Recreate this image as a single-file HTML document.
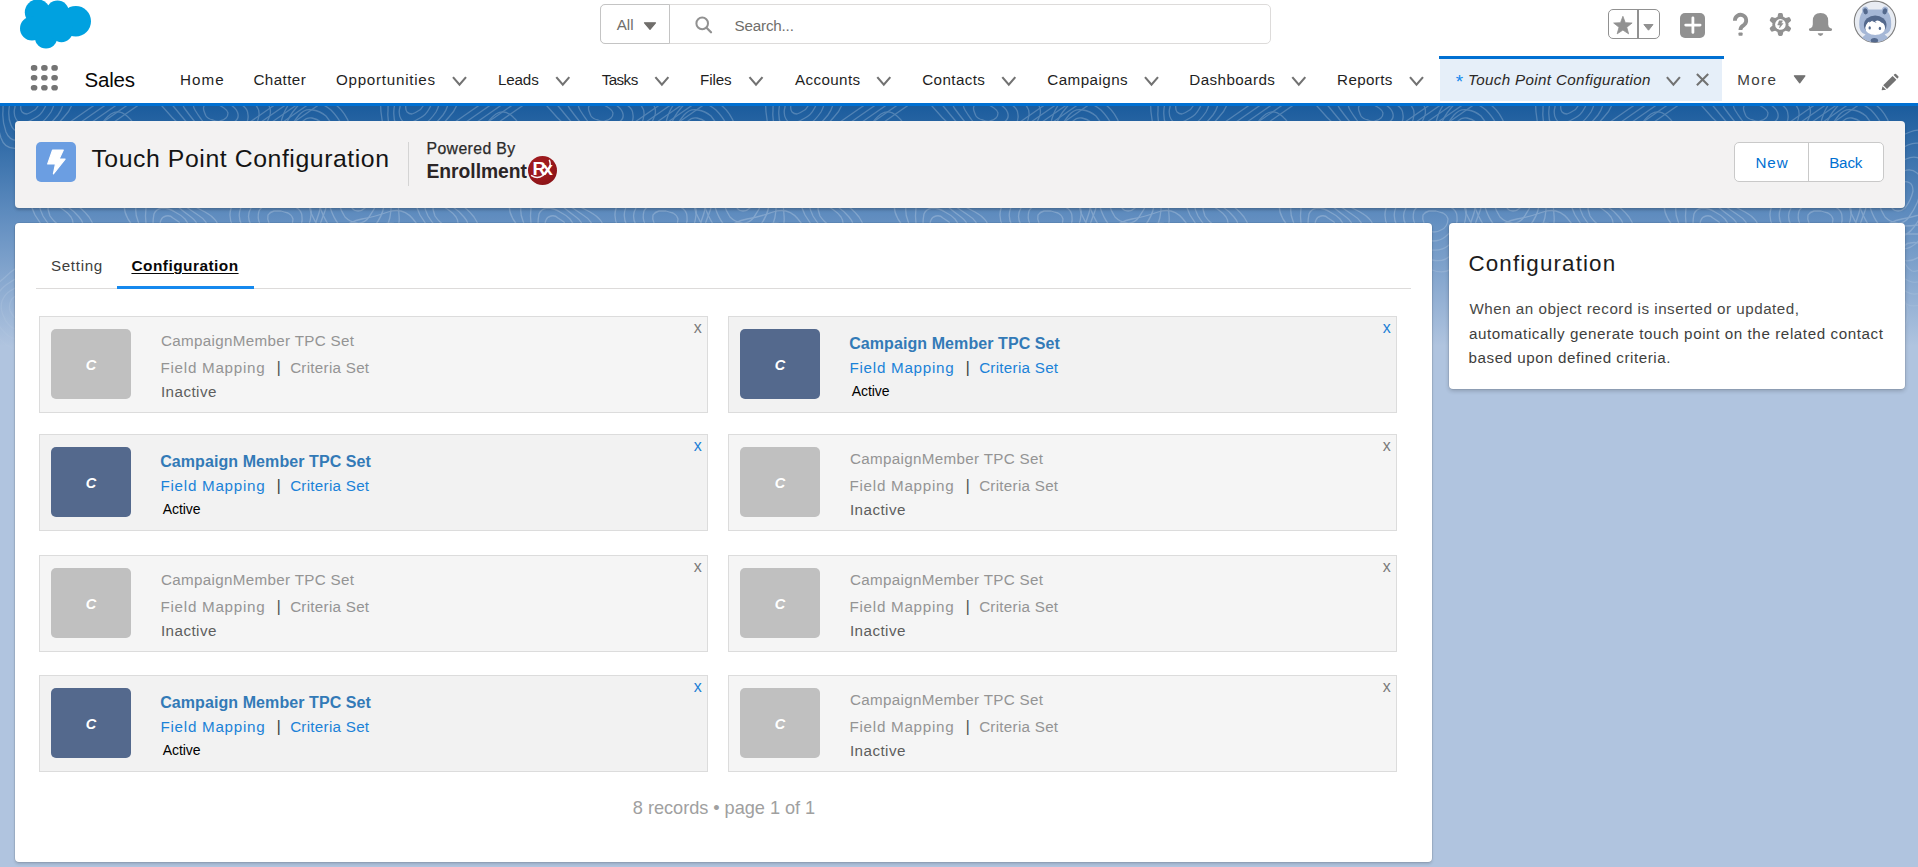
<!DOCTYPE html>
<html lang="en">
<head>
<meta charset="utf-8">
<title>Touch Point Configuration | Salesforce</title>
<style>
html,body{margin:0;padding:0}
body{width:1918px;height:867px;overflow:hidden;position:relative;background:#b0c4df;font-family:"Liberation Sans",sans-serif}
.abs,.t,.card,.av,svg{position:absolute}
.t{white-space:pre;display:block}
#band{left:0;top:106px;width:1918px;height:240px;background:linear-gradient(to bottom,#1b5c9d 0%,#6691c2 50%,#b0c4df 100%)}
#hdr{left:0;top:0;width:1918px;height:103px;background:#fff}
#bar{left:0;top:103px;width:1918px;height:3.4px;background:#0070d2}
#search{left:600px;top:4px;width:669px;height:38px;border:1px solid #dddbda;border-radius:5px;background:#fff}
#all{left:600px;top:4px;width:67.5px;height:38px;border:1px solid #c4c4c4;border-radius:5px 0 0 5px;background:#fff}
#fav{left:1608px;top:9px;width:50px;height:28px;border:1px solid #919191;border-radius:5px;background:#fff}
#favd{left:1636.8px;top:9px;width:2px;height:30px;background:#919191}
#plus{left:1680px;top:13px;width:25px;height:25px;border-radius:5px;background:#919191}
#tabtop{left:1438.8px;top:55.8px;width:285.2px;height:3.4px;background:#0070d2}
#tabbg{left:1439.8px;top:59.2px;width:282.2px;height:42.2px;background:#e6eff9}
#phead{left:15px;top:121px;width:1890px;height:86.6px;background:#f3f2f2;border-radius:4px;box-shadow:0 2px 3px rgba(0,0,0,.22)}
#picon{left:36px;top:142px;width:40px;height:40px;border-radius:5px;background:#6b9ee2}
#pdiv{left:408px;top:142px;width:1px;height:44px;background:#d4d4d4}
#btns{left:1734px;top:142px;width:148px;height:38px;border:1px solid #c9c9c9;border-radius:5px;background:#fff}
#btnd{left:1808px;top:142px;width:1px;height:40px;background:#c9c9c9}
#main{left:15.2px;top:223px;width:1417.3px;height:639.3px;background:#fff;border-radius:4px;box-shadow:0 0 0 .6px rgba(0,0,0,.13),0 2px 3px rgba(0,0,0,.15)}
#side{left:1448.5px;top:223.4px;width:456px;height:165.8px;background:#fff;border-radius:4px;box-shadow:0 0 0 .6px rgba(0,0,0,.1),0 2px 4px rgba(0,0,0,.2)}
#tabline{left:36px;top:287.6px;width:1375px;height:1.1px;background:#dddbda}
#tabact{left:117px;top:285.8px;width:136.7px;height:3px;background:#1589ee}
.card{width:667.3px;height:94.8px;border:1px solid #dcdcdc;box-sizing:content-box}
.av{left:11.2px;top:11.9px;width:80px;height:70px;border-radius:5px}
#rx{left:527.6px;top:155.6px;width:29.6px;height:29.6px;border-radius:50%;background:radial-gradient(circle at 40% 35%,#a81e22 0%,#96171b 55%,#7d0f13 100%)}
</style>
</head>
<body>
<div class="abs" id="band"></div>
<svg class="abs" id="tex" style="left:0;top:106px;opacity:.22;-webkit-mask-image:linear-gradient(to bottom,#000 0%,#000 45%,transparent 100%);mask-image:linear-gradient(to bottom,#000 0%,#000 45%,transparent 100%)" width="1918" height="250" viewBox="0 0 1918 250"><g id="tx" fill="none" stroke="#fff" stroke-width="1.3"><path d="M27 8Q24 8 22 6Q20 3 21 -1Q22 -4 23 -8Q24 -11 27 -14Q30 -17 33 -16Q36 -15 37 -13Q39 -10 39 -7Q40 -3 38 0Q36 4 33 5Q30 7 27 8Z"/><path d="M25 17Q19 18 16 13Q13 8 15 1Q16 -5 18 -11Q19 -18 24 -23Q30 -28 35 -25Q39 -22 42 -18Q45 -14 46 -9Q48 -3 44 3Q41 9 35 12Q30 15 25 17Z"/><path d="M22 25Q14 27 11 19Q8 12 9 3Q10 -5 12 -15Q13 -25 21 -31Q29 -38 36 -33Q42 -28 47 -23Q51 -19 54 -11Q56 -3 51 6Q45 15 38 19Q30 24 22 25Z"/><path d="M20 34Q10 36 6 26Q2 15 3 5Q3 -5 5 -19Q7 -33 18 -40Q29 -46 37 -39Q45 -32 52 -28Q59 -24 62 -13Q66 -2 58 9Q49 20 40 26Q31 32 20 34Z"/><path d="M18 42Q5 44 1 32Q-3 19 -4 6Q-5 -6 -3 -24Q-0 -41 14 -47Q29 -52 38 -44Q46 -36 57 -33Q68 -31 72 -16Q76 -1 64 11Q53 24 42 32Q31 40 18 42Z"/><path d="M111 46Q109 43 110 39Q110 36 112 33Q114 30 117 28Q120 26 123 28Q127 30 128 34Q129 37 129 41Q130 44 129 48Q127 52 124 52Q120 52 117 51Q114 49 111 46Z"/><path d="M105 51Q101 46 102 39Q103 33 106 27Q109 22 114 18Q120 14 125 19Q131 23 133 29Q135 36 136 42Q138 48 136 55Q133 61 127 61Q120 61 115 59Q109 56 105 51Z"/><path d="M99 56Q93 48 95 39Q97 29 100 21Q104 13 111 8Q119 3 127 10Q135 17 138 26Q140 34 144 43Q148 53 144 62Q139 71 130 70Q120 69 113 66Q105 63 99 56Z"/><path d="M228 7Q228 10 226 12Q224 14 220 15Q217 16 213 14Q208 13 206 10Q205 8 204 5Q203 2 204 -0Q205 -3 209 -3Q213 -3 217 -2Q221 0 224 2Q227 4 228 7Z"/><path d="M238 8Q239 13 234 16Q230 19 224 21Q218 23 211 20Q204 18 201 13Q198 9 195 4Q192 -1 194 -6Q196 -10 204 -10Q212 -9 218 -7Q224 -4 231 -1Q237 3 238 8Z"/><path d="M248 9Q249 16 243 20Q236 25 228 27Q220 30 210 26Q200 22 195 16Q190 10 185 3Q180 -4 184 -11Q188 -18 200 -16Q211 -14 220 -11Q228 -8 238 -3Q248 1 248 9Z"/><path d="M259 9Q258 19 250 24Q242 30 232 34Q221 37 208 32Q196 26 189 19Q182 11 174 1Q166 -8 173 -16Q181 -24 196 -21Q211 -17 222 -15Q233 -13 247 -7Q260 -1 259 9Z"/><path d="M270 9Q266 21 257 28Q248 35 235 40Q222 45 207 37Q192 30 182 21Q172 12 162 -0Q152 -13 164 -21Q175 -29 193 -24Q210 -20 224 -20Q239 -19 256 -11Q273 -3 270 9Z"/><path d="M309 39Q306 39 303 38Q300 37 300 33Q300 29 302 27Q303 24 306 21Q308 19 311 20Q314 20 316 22Q318 25 319 28Q321 31 319 34Q318 37 315 38Q312 39 309 39Z"/><path d="M308 46Q303 47 297 45Q292 42 292 36Q293 29 296 24Q298 19 303 15Q307 11 312 12Q317 13 321 16Q324 20 327 26Q330 31 326 37Q323 42 318 44Q313 45 308 46Z"/><path d="M306 54Q299 57 291 52Q284 48 285 38Q287 29 290 22Q294 15 299 9Q305 2 313 4Q320 5 326 10Q331 16 335 24Q338 31 333 39Q328 47 321 49Q314 50 306 54Z"/><path d="M304 62Q294 68 285 60Q276 53 279 41Q283 29 286 19Q289 10 296 2Q303 -7 313 -5Q324 -2 331 4Q338 11 343 21Q347 32 339 41Q332 50 323 53Q315 57 304 62Z"/><path d="M303 72Q289 80 279 69Q270 57 275 43Q280 29 281 17Q283 5 292 -6Q302 -18 314 -13Q326 -9 336 -1Q345 6 350 19Q355 32 345 43Q335 53 325 59Q316 65 303 72Z"/><path d="M73 117Q72 120 69 120Q66 121 62 120Q58 119 55 116Q52 113 50 110Q49 107 48 103Q48 100 51 99Q53 97 57 100Q61 102 65 105Q68 107 71 111Q73 114 73 117Z"/><path d="M82 122Q80 126 75 128Q70 129 63 128Q57 127 51 121Q46 115 43 110Q40 104 39 98Q37 91 43 90Q49 88 56 93Q62 97 68 101Q74 105 79 111Q85 118 82 122Z"/><path d="M92 127Q87 132 80 134Q74 136 65 135Q56 134 48 126Q40 118 35 109Q31 101 29 92Q27 82 36 82Q45 81 54 87Q63 92 73 97Q82 102 89 111Q96 121 92 127Z"/><path d="M181 122Q182 125 179 126Q177 128 174 129Q170 129 166 129Q162 128 161 125Q159 121 160 119Q160 116 161 114Q162 111 166 110Q170 109 173 112Q176 114 179 116Q181 119 181 122Z"/><path d="M190 123Q191 128 186 131Q182 134 176 136Q171 137 164 135Q157 133 154 128Q152 122 153 118Q153 113 154 108Q156 103 162 102Q169 102 175 106Q181 109 185 113Q189 118 190 123Z"/><path d="M199 124Q200 132 194 136Q187 140 179 143Q171 146 161 142Q151 139 149 131Q147 123 146 117Q145 110 146 102Q148 94 158 94Q169 95 177 100Q184 106 191 111Q198 116 199 124Z"/><path d="M209 125Q210 135 201 141Q192 146 182 150Q171 154 159 149Q147 143 144 133Q141 124 138 115Q134 106 137 95Q140 85 154 87Q169 89 178 96Q188 102 198 109Q208 115 209 125Z"/><path d="M219 126Q219 139 208 146Q197 152 185 157Q172 162 157 155Q143 147 139 136Q136 124 128 113Q121 101 127 89Q133 76 151 81Q169 86 180 92Q191 99 205 106Q220 114 219 126Z"/><path d="M279 126Q275 126 272 123Q270 120 269 117Q267 113 268 109Q270 106 274 105Q277 105 281 105Q284 106 288 107Q292 109 293 113Q293 117 291 120Q289 123 286 124Q283 126 279 126Z"/><path d="M278 135Q271 134 267 129Q262 124 260 118Q257 112 259 105Q262 99 269 99Q276 98 282 98Q288 98 295 101Q302 104 302 111Q303 118 298 123Q294 128 290 131Q285 135 278 135Z"/><path d="M277 144Q267 142 261 135Q255 127 251 119Q246 110 251 102Q256 94 265 93Q274 92 283 90Q292 89 302 94Q313 99 311 109Q310 120 305 126Q300 132 294 139Q287 145 277 144Z"/><path d="M277 154Q263 151 255 141Q248 131 242 120Q236 108 243 98Q250 88 261 87Q273 85 285 82Q297 78 310 86Q323 94 319 107Q315 120 310 129Q305 137 298 147Q290 157 277 154Z"/><path d="M277 164Q260 158 250 146Q241 134 233 121Q226 107 235 95Q245 84 258 80Q271 77 287 72Q303 66 317 78Q331 90 325 105Q319 121 315 132Q312 143 303 157Q293 170 277 164Z"/><path d="M358 105Q354 105 352 102Q349 99 348 94Q346 90 349 86Q351 81 354 79Q358 77 362 76Q366 75 370 77Q373 79 373 85Q372 90 370 94Q368 98 365 102Q362 105 358 105Z"/><path d="M357 117Q350 116 345 111Q341 105 339 98Q336 90 340 83Q344 75 350 71Q357 68 364 65Q371 62 377 67Q383 72 381 81Q380 90 377 97Q374 104 369 111Q364 118 357 117Z"/><path d="M356 130Q346 127 339 119Q333 111 330 101Q326 90 332 80Q338 69 347 63Q355 58 366 53Q377 48 384 56Q392 65 389 77Q386 90 384 100Q382 111 374 121Q366 132 356 130Z"/><path d="M355 141Q342 136 334 126Q326 117 321 104Q316 91 324 77Q332 63 343 55Q353 46 368 39Q382 33 391 46Q399 59 395 74Q391 90 391 104Q390 119 380 133Q369 147 355 141Z"/><path d="M355 151Q340 142 329 133Q318 123 311 107Q305 91 315 74Q326 57 338 45Q351 33 370 26Q388 19 396 37Q403 56 400 73Q397 89 399 109Q401 129 386 145Q371 161 355 151Z"/><path d="M20 213Q16 213 14 211Q12 208 10 205Q9 201 10 197Q11 193 14 191Q17 190 20 188Q23 187 27 189Q30 190 30 194Q31 199 29 202Q28 206 25 209Q23 212 20 213Z"/><path d="M20 223Q14 224 9 219Q5 215 3 209Q-0 203 2 195Q5 188 10 185Q15 182 21 179Q26 176 32 179Q38 182 38 190Q37 198 35 204Q33 210 29 216Q26 223 20 223Z"/><path d="M20 234Q11 233 5 227Q-1 221 -5 212Q-9 204 -5 194Q-1 184 6 179Q13 174 22 169Q30 164 38 169Q46 174 44 186Q43 197 41 206Q39 215 34 224Q29 234 20 234Z"/><path d="M20 245Q8 242 1 234Q-7 227 -12 216Q-17 205 -12 192Q-6 180 3 173Q11 165 22 158Q34 150 43 159Q52 168 49 182Q47 197 46 208Q46 220 39 233Q32 247 20 245Z"/><path d="M113 219Q110 218 109 215Q109 212 111 209Q113 206 115 204Q117 201 121 199Q125 198 127 200Q129 202 130 205Q130 208 129 211Q129 215 126 217Q123 219 120 220Q116 220 113 219Z"/><path d="M108 226Q102 225 102 219Q101 213 104 208Q108 203 111 198Q115 193 121 191Q128 188 132 193Q135 198 136 202Q137 207 137 213Q136 218 131 222Q125 226 119 227Q113 228 108 226Z"/><path d="M103 233Q95 231 94 223Q94 215 98 208Q102 201 107 192Q112 184 122 182Q131 180 135 187Q140 194 142 200Q145 206 144 214Q144 223 136 228Q127 233 119 234Q110 235 103 233Z"/><path d="M98 240Q87 237 88 226Q88 216 92 206Q96 197 102 185Q109 174 121 173Q134 172 139 181Q143 191 148 197Q154 204 153 216Q152 227 141 233Q129 240 118 241Q108 243 98 240Z"/><path d="M225 228Q220 226 219 222Q217 218 217 213Q217 209 219 205Q221 200 226 201Q231 201 234 203Q238 206 241 209Q245 212 245 217Q245 222 241 224Q238 227 233 228Q229 229 225 228Z"/><path d="M221 237Q213 234 210 227Q207 220 206 212Q206 204 210 197Q214 189 223 190Q232 192 238 196Q244 199 250 205Q257 210 257 218Q257 227 250 231Q243 235 235 238Q228 240 221 237Z"/><path d="M217 247Q206 243 201 232Q197 222 195 210Q194 199 201 189Q208 179 220 182Q232 184 241 188Q250 192 261 199Q272 207 270 219Q267 232 257 237Q247 242 237 247Q228 251 217 247Z"/><path d="M325 209Q321 208 320 205Q319 201 320 198Q321 195 323 192Q325 189 328 188Q332 188 335 190Q337 193 339 196Q340 199 340 202Q341 206 338 208Q335 210 332 210Q328 211 325 209Z"/><path d="M321 216Q315 214 314 208Q312 202 313 197Q315 192 317 186Q320 180 327 179Q333 179 338 184Q342 189 345 193Q348 198 349 204Q349 211 344 214Q339 218 333 218Q327 219 321 216Z"/><path d="M317 223Q309 220 307 212Q305 203 306 195Q307 187 311 179Q315 170 325 170Q335 171 340 178Q346 185 351 191Q357 197 358 206Q358 216 350 220Q342 225 334 226Q326 227 317 223Z"/><path d="M314 230Q303 226 301 215Q298 204 298 193Q298 183 304 171Q310 160 323 162Q336 165 342 173Q349 182 359 189Q368 195 368 208Q368 221 357 226Q345 231 335 232Q324 234 314 230Z"/><path d="M389 148Q388 153 386 157Q383 161 379 164Q375 166 372 165Q368 163 366 159Q364 156 362 151Q361 146 363 142Q366 137 370 137Q375 136 378 137Q382 138 385 140Q389 143 389 148Z"/><path d="M399 146Q398 156 393 162Q389 169 382 174Q376 178 369 175Q362 172 358 166Q354 160 352 152Q349 144 354 136Q359 128 367 128Q374 128 381 128Q388 127 394 132Q401 137 399 146Z"/><path d="M409 144Q406 158 400 167Q394 177 385 184Q376 191 367 186Q357 181 351 173Q344 165 341 153Q337 140 345 131Q354 121 364 120Q374 120 384 118Q395 115 404 123Q413 131 409 144Z"/><path d="M418 142Q412 159 406 172Q400 185 388 194Q376 204 364 197Q352 191 343 181Q334 171 329 154Q325 138 338 126Q350 115 362 113Q374 111 388 106Q403 101 413 113Q424 125 418 142Z"/><path d="M70 16L96 -2"/><path d="M81 16L107 -2"/><path d="M92 16L118 -2"/><path d="M103 16L129 -2"/><path d="M114 16L140 -2"/><path d="M250 16L276 -2"/><path d="M261 16L287 -2"/><path d="M272 16L298 -2"/><path d="M283 16L309 -2"/><path d="M294 16L320 -2"/></g><use href="#tx" x="385"/><use href="#tx" x="770"/><use href="#tx" x="1155"/><use href="#tx" x="1540"/></svg>
<div class="abs" id="hdr"></div>
<div class="abs" id="bar"></div>
<div class="abs" id="search"></div>
<div class="abs" id="all"></div>
<div class="abs" id="fav"></div>
<div class="abs" id="favd"></div>
<div class="abs" id="plus"></div>
<div class="abs" id="tabtop"></div>
<div class="abs" id="tabbg"></div>
<div class="abs" id="phead"></div>
<div class="abs" id="picon"></div>
<div class="abs" id="pdiv"></div>
<div class="abs" id="btns"></div>
<div class="abs" id="btnd"></div>
<div class="abs" id="main"></div>
<div class="abs" id="side"></div>
<div class="abs" id="tabline"></div>
<div class="abs" id="tabact"></div>
<div class="abs" id="rx"></div>
<svg class="abs" style="left:0;top:0" width="1918" height="867" viewBox="0 0 1918 867">
<g fill="#00a1e0"><circle cx="37.6" cy="12.2" r="12.8"/><circle cx="57.5" cy="11.6" r="11.2"/><circle cx="75.8" cy="21.3" r="15.2"/><circle cx="32" cy="28.6" r="12"/><circle cx="46" cy="37.3" r="11.2"/><circle cx="61.5" cy="30.8" r="11.4"/><rect x="34" y="12" width="38" height="24"/></g>
<rect x="30.8" y="65.1" width="6.6" height="5.6" rx="2.8" fill="#747474"/>
<rect x="41.1" y="65.1" width="6.6" height="5.6" rx="2.8" fill="#747474"/>
<rect x="51.3" y="65.1" width="6.6" height="5.6" rx="2.8" fill="#747474"/>
<rect x="30.8" y="75.0" width="6.6" height="5.6" rx="2.8" fill="#747474"/>
<rect x="41.1" y="75.0" width="6.6" height="5.6" rx="2.8" fill="#747474"/>
<rect x="51.3" y="75.0" width="6.6" height="5.6" rx="2.8" fill="#747474"/>
<rect x="30.8" y="85.0" width="6.6" height="5.6" rx="2.8" fill="#747474"/>
<rect x="41.1" y="85.0" width="6.6" height="5.6" rx="2.8" fill="#747474"/>
<rect x="51.3" y="85.0" width="6.6" height="5.6" rx="2.8" fill="#747474"/>
<path d="M453.0 77.1L459.5 84.7L466.0 77.1" fill="none" stroke="#727272" stroke-width="2.1" stroke-linejoin="miter"/>
<path d="M556.3 77.1L562.8 84.7L569.3 77.1" fill="none" stroke="#727272" stroke-width="2.1" stroke-linejoin="miter"/>
<path d="M655.4 77.1L661.9 84.7L668.4 77.1" fill="none" stroke="#727272" stroke-width="2.1" stroke-linejoin="miter"/>
<path d="M749.5 77.1L756.0 84.7L762.5 77.1" fill="none" stroke="#727272" stroke-width="2.1" stroke-linejoin="miter"/>
<path d="M877.3 77.1L883.8 84.7L890.3 77.1" fill="none" stroke="#727272" stroke-width="2.1" stroke-linejoin="miter"/>
<path d="M1002.3 77.1L1008.8 84.7L1015.3 77.1" fill="none" stroke="#727272" stroke-width="2.1" stroke-linejoin="miter"/>
<path d="M1145.0 77.1L1151.5 84.7L1158.0 77.1" fill="none" stroke="#727272" stroke-width="2.1" stroke-linejoin="miter"/>
<path d="M1292.3 77.1L1298.8 84.7L1305.3 77.1" fill="none" stroke="#727272" stroke-width="2.1" stroke-linejoin="miter"/>
<path d="M1410.0 77.1L1416.5 84.7L1423.0 77.1" fill="none" stroke="#727272" stroke-width="2.1" stroke-linejoin="miter"/>
<path d="M1666.9 77.1L1673.4 84.7L1679.9 77.1" fill="none" stroke="#727272" stroke-width="2.1" stroke-linejoin="miter"/>
<path d="M1696.9 74L1708.2 85.2M1708.2 74L1696.9 85.2" stroke="#727272" stroke-width="2.1" fill="none"/>
<path d="M1794.4 75.8L1804.9 75.8L1799.7 82.8Z" fill="#727272" stroke="#727272" stroke-width="1.2" stroke-linejoin="round"/>
<g fill="#727272"><path d="M1892.6 75.9L1896.4 79.7L1887.0 89.0L1883.2 85.3Z"/><path d="M1893.6 74.9L1894.6 73.9Q1895.3 73.4 1896 73.9L1898.3 76.2Q1898.8 76.9 1898.3 77.6L1897.3 78.7Z"/><path d="M1882.5 86.2L1886.1 89.8L1881.9 90.2Q1881.6 90.1 1881.7 89.8Z"/></g>
<path d="M644.5 22.8L655.5 22.8L650.0 29.4Z" fill="#706e6b" stroke="#706e6b" stroke-width="1.2" stroke-linejoin="round"/>
<circle cx="702.2" cy="23.4" r="5.8" fill="none" stroke="#919191" stroke-width="2"/><path d="M706.5 27.8L711 32.2" stroke="#919191" stroke-width="2.3" stroke-linecap="round"/>
<path d="M1622.90 16.30L1625.29 22.70L1632.13 23.00L1626.77 27.26L1628.60 33.85L1622.90 30.07L1617.20 33.85L1619.03 27.26L1613.67 23.00L1620.51 22.70Z" fill="#919191" stroke="#919191" stroke-width="0.8" stroke-linejoin="round"/>
<path d="M1643.9 24.5L1653.0 24.5L1648.5 30.2Z" fill="#919191" stroke="#919191" stroke-width="1.0" stroke-linejoin="round"/>
<path d="M1685.7 25.1H1700.1M1692.9 17.8V32.4" stroke="#fff" stroke-width="2.8" stroke-linecap="round"/>
<path d="M1734.9 20.7A5.65 5.65 0 1 1 1744.3 24.7Q1740.4 26.7 1740.4 30" fill="none" stroke="#919191" stroke-width="3.8"/><rect x="1738.5" y="32.4" width="4.1" height="3.4" rx=".8" fill="#919191"/>
<path d="M1778.76 17.70L1779.49 14.34L1781.31 14.34L1782.04 17.70L1785.38 19.63L1788.66 18.58L1789.57 20.16L1787.02 22.47L1787.02 26.33L1789.57 28.64L1788.66 30.22L1785.38 29.17L1782.04 31.10L1781.31 34.46L1779.49 34.46L1778.76 31.10L1775.42 29.17L1772.14 30.22L1771.23 28.64L1773.78 26.33L1773.78 22.47L1771.23 20.16L1772.14 18.58L1775.42 19.63Z" fill="#919191" stroke="#919191" stroke-width="2.9" stroke-linejoin="round"/><circle cx="1780.4" cy="24.4" r="5.3" fill="#fff"/><path d="M1779.20 20.80L1782.50 20.80L1781.25 23.50L1783.10 23.50L1779.45 28.00L1780.10 25.00L1777.70 25.00Z" fill="#919191" stroke="#919191" stroke-width="0.5" stroke-linejoin="round"/>
<path d="M1810.2 30.9Q1808.9 30.9 1808.9 29.6Q1808.9 28.2 1810.4 28.2Q1812.8 27.6 1812.8 24.6V21Q1812.8 12.9 1820.5 12.9Q1828.2 12.9 1828.2 21V24.6Q1828.2 27.6 1830.6 28.2Q1832.1 28.2 1832.1 29.6Q1832.1 30.9 1830.8 30.9Z" fill="#919191"/><path d="M1817.7 33.3H1823.3Q1822.8 36 1820.5 36Q1818.2 36 1817.7 33.3Z" fill="#919191"/>
<defs><clipPath id="avc"><circle cx="1875" cy="21.8" r="20.4"/></clipPath></defs>
<circle cx="1875" cy="21.8" r="20.7" fill="#e8ecf3" stroke="#808080" stroke-width="1.1"/>
<g clip-path="url(#avc)"><ellipse cx="1865.4" cy="10.9" rx="3.2" ry="4.3" fill="#a5b7d6" transform="rotate(-12 1865.4 10.9)"/><ellipse cx="1884.9" cy="10.9" rx="3.2" ry="4.3" fill="#a5b7d6" transform="rotate(12 1884.9 10.9)"/><path d="M1859.2 24.6Q1859.2 9.4 1868.6 9.6H1881.6Q1891.2 9.4 1891.2 24.6Q1891.2 33.4 1884.6 34.6L1891.6 40.4V46H1858.6V40.4L1865.6 34.6Q1859.2 33.4 1859.2 24.6Z" fill="#a5b7d6"/><ellipse cx="1865.5" cy="11.3" rx="2.2" ry="3.1" fill="#54698d" transform="rotate(-12 1865.5 11.3)"/><ellipse cx="1884.8" cy="11.3" rx="2.2" ry="3.1" fill="#54698d" transform="rotate(12 1884.8 11.3)"/><ellipse cx="1875.2" cy="25" rx="11.3" ry="9.6" fill="#54698d"/><ellipse cx="1875.2" cy="28" rx="10" ry="6.9" fill="#ffffff"/><path d="M1865.8 27.6Q1866.4 22.6 1869.4 21.4L1868.8 23.4L1872.2 20.8L1875.8 22.4Q1874.4 20.6 1877.6 20.6Q1881.2 21.2 1881.8 24L1882.8 22.8Q1884.8 25 1884.6 27.6Q1880 23.4 1875.4 24Q1869.4 23 1865.8 27.6Z" fill="#ffffff"/><path d="M1872 21L1876.6 22.9L1874.6 20.6Z" fill="#54698d"/><ellipse cx="1869.7" cy="27.9" rx="1.2" ry="1.7" fill="#54698d"/><ellipse cx="1879.9" cy="28.4" rx="1.2" ry="1.7" fill="#54698d"/><ellipse cx="1874.4" cy="40.6" rx="3.7" ry="2.6" fill="#54698d"/></g>
<path d="M52.5 150.1L63.3 150.1L59.1 159.1L65.1 159.1L53.4 173.8L55.5 163.9L47.7 163.9Z" fill="#fff" stroke="#fff" stroke-width="1.2" stroke-linejoin="round"/>
<path d="M531.6 175.6Q540 181.4 548.6 169.6Q551.4 165 549.4 160.4" fill="none" stroke="#fff" stroke-width="1.5" stroke-linecap="round" opacity=".95"/>
</svg>
<div class="card" style="left:39px;top:316px;background:#f5f5f5"><div class="av" style="background:#c0c0c0"></div></div>
<div class="card" style="left:728px;top:316px;background:#f2f2f2"><div class="av" style="background:#54698d"></div></div>
<div class="card" style="left:39px;top:434px;background:#f2f2f2"><div class="av" style="background:#54698d"></div></div>
<div class="card" style="left:728px;top:434px;background:#f5f5f5"><div class="av" style="background:#c0c0c0"></div></div>
<div class="card" style="left:39px;top:555px;background:#f5f5f5"><div class="av" style="background:#c0c0c0"></div></div>
<div class="card" style="left:728px;top:555px;background:#f5f5f5"><div class="av" style="background:#c0c0c0"></div></div>
<div class="card" style="left:39px;top:675px;background:#f2f2f2"><div class="av" style="background:#54698d"></div></div>
<div class="card" style="left:728px;top:675px;background:#f5f5f5"><div class="av" style="background:#c0c0c0"></div></div>
<span class="t" style="left:84.57px;top:69.75px;font-size:20.5px;line-height:20.5px;color:#080707;letter-spacing:-0.21px;">Sales</span>
<span class="t" style="left:180.08px;top:71.83px;font-size:15.2px;line-height:15.2px;color:#1f1f1f;letter-spacing:1.036px;">Home</span>
<span class="t" style="left:253.44px;top:71.83px;font-size:15.2px;line-height:15.2px;color:#1f1f1f;letter-spacing:0.425px;">Chatter</span>
<span class="t" style="left:335.94px;top:71.83px;font-size:15.2px;line-height:15.2px;color:#1f1f1f;letter-spacing:0.739px;">Opportunities</span>
<span class="t" style="left:497.98px;top:71.83px;font-size:15.2px;line-height:15.2px;color:#1f1f1f;letter-spacing:-0.155px;">Leads</span>
<span class="t" style="left:601.70px;top:71.83px;font-size:15.2px;line-height:15.2px;color:#1f1f1f;letter-spacing:-0.567px;">Tasks</span>
<span class="t" style="left:700.08px;top:71.83px;font-size:15.2px;line-height:15.2px;color:#1f1f1f;letter-spacing:-0.127px;">Files</span>
<span class="t" style="left:795.00px;top:71.83px;font-size:15.2px;line-height:15.2px;color:#1f1f1f;letter-spacing:0.382px;">Accounts</span>
<span class="t" style="left:922.24px;top:71.83px;font-size:15.2px;line-height:15.2px;color:#1f1f1f;letter-spacing:0.397px;">Contacts</span>
<span class="t" style="left:1047.24px;top:71.83px;font-size:15.2px;line-height:15.2px;color:#1f1f1f;letter-spacing:0.448px;">Campaigns</span>
<span class="t" style="left:1189.28px;top:71.83px;font-size:15.2px;line-height:15.2px;color:#1f1f1f;letter-spacing:0.418px;">Dashboards</span>
<span class="t" style="left:1337.08px;top:71.83px;font-size:15.2px;line-height:15.2px;color:#1f1f1f;letter-spacing:0.364px;">Reports</span>
<span class="t" style="left:1455.83px;top:71.82px;font-size:19px;line-height:19px;color:#1589ee;">*</span>
<span class="t" style="left:1468.00px;top:71.83px;font-size:15.2px;line-height:15.2px;color:#2b2826;font-style:italic;letter-spacing:0.344px;">Touch Point Configuration</span>
<span class="t" style="left:1737.28px;top:71.83px;font-size:15.2px;line-height:15.2px;color:#3e3e3c;letter-spacing:1.338px;">More</span>
<span class="t" style="left:616.70px;top:17.23px;font-size:15.2px;line-height:15.2px;color:#706e6b;letter-spacing:-0.013px;">All</span>
<span class="t" style="left:734.54px;top:17.93px;font-size:15.2px;line-height:15.2px;color:#706e6b;letter-spacing:-0.182px;">Search...</span>
<span class="t" style="left:91.40px;top:146.71px;font-size:24.8px;line-height:24.8px;color:#141414;letter-spacing:0.569px;">Touch Point Configuration</span>
<span class="t" style="left:426.54px;top:141.23px;font-size:15.8px;line-height:15.8px;color:#2b2b2b;letter-spacing:0.383px;-webkit-text-stroke:0.25px #2b2b2b;">Powered By</span>
<span class="t" style="left:426.46px;top:161.56px;font-size:19.3px;line-height:19.3px;color:#2b2526;font-weight:700;letter-spacing:-0.019px;">Enrollment</span>
<span class="t" style="left:532.41px;top:160.46px;font-size:18.6px;line-height:18.6px;color:#ffffff;font-weight:700;letter-spacing:-3.307px;">Rx</span>
<span class="t" style="left:1755.48px;top:154.83px;font-size:15.2px;line-height:15.2px;color:#0070d2;letter-spacing:0.913px;">New</span>
<span class="t" style="left:1829.18px;top:154.83px;font-size:15.2px;line-height:15.2px;color:#0070d2;letter-spacing:-0.183px;">Back</span>
<span class="t" style="left:50.94px;top:257.93px;font-size:15.2px;line-height:15.2px;color:#3e3e3c;letter-spacing:0.671px;">Setting</span>
<span class="t" style="left:131.43px;top:257.76px;font-size:15.4px;line-height:15.4px;color:#080707;font-weight:700;letter-spacing:0.481px;text-decoration:underline;text-underline-offset:2px;text-decoration-thickness:1px;">Configuration</span>
<span class="t" style="left:1468.48px;top:252.74px;font-size:22.4px;line-height:22.4px;color:#1c1c1c;letter-spacing:1.125px;">Configuration</span>
<span class="t" style="left:1469.45px;top:300.93px;font-size:15.2px;line-height:15.2px;color:#484846;letter-spacing:0.505px;">When an object record is inserted or updated,</span>
<span class="t" style="left:1468.99px;top:326.03px;font-size:15.2px;line-height:15.2px;color:#3e3e3c;letter-spacing:0.577px;">automatically generate touch point on the related contact</span>
<span class="t" style="left:1468.54px;top:349.83px;font-size:15.2px;line-height:15.2px;color:#3e3e3c;letter-spacing:0.536px;">based upon defined criteria.</span>
<span class="t" style="left:632.87px;top:798.59px;font-size:18.2px;line-height:18.2px;color:#a0a0a0;letter-spacing:-0.044px;">8 records • page 1 of 1</span>
<span class="t" style="left:85.78px;top:358.33px;font-size:14.5px;line-height:14.5px;color:#ffffff;font-weight:700;font-style:italic;">C</span>
<span class="t" style="left:693.74px;top:320.06px;font-size:16px;line-height:16px;color:#7a7a7a;">x</span>
<span class="t" style="left:160.94px;top:332.73px;font-size:15.2px;line-height:15.2px;color:#949494;letter-spacing:0.324px;">CampaignMember TPC Set</span>
<span class="t" style="left:160.48px;top:359.53px;font-size:15.2px;line-height:15.2px;color:#949494;letter-spacing:0.739px;">Field Mapping</span>
<span class="t" style="left:276.47px;top:359.11px;font-size:17px;line-height:17px;color:#555555;">|</span>
<span class="t" style="left:290.14px;top:359.53px;font-size:15.2px;line-height:15.2px;color:#949494;letter-spacing:0.272px;">Criteria Set</span>
<span class="t" style="left:160.93px;top:384.33px;font-size:15.2px;line-height:15.2px;color:#5e5e5e;letter-spacing:0.447px;">Inactive</span>
<span class="t" style="left:774.77px;top:358.33px;font-size:14.5px;line-height:14.5px;color:#ffffff;font-weight:700;font-style:italic;">C</span>
<span class="t" style="left:1382.74px;top:320.06px;font-size:16px;line-height:16px;color:#1b7fd6;">x</span>
<span class="t" style="left:849.20px;top:335.66px;font-size:16px;line-height:16px;color:#337ab7;font-weight:700;letter-spacing:0.081px;">Campaign Member TPC Set</span>
<span class="t" style="left:849.48px;top:359.63px;font-size:15.2px;line-height:15.2px;color:#1b82d8;letter-spacing:0.739px;">Field Mapping</span>
<span class="t" style="left:965.47px;top:359.11px;font-size:17px;line-height:17px;color:#444444;">|</span>
<span class="t" style="left:979.14px;top:359.63px;font-size:15.2px;line-height:15.2px;color:#1b82d8;letter-spacing:0.272px;">Criteria Set</span>
<span class="t" style="left:851.70px;top:383.75px;font-size:14px;line-height:14px;color:#000000;letter-spacing:-0.073px;">Active</span>
<span class="t" style="left:85.78px;top:476.33px;font-size:14.5px;line-height:14.5px;color:#ffffff;font-weight:700;font-style:italic;">C</span>
<span class="t" style="left:693.74px;top:438.06px;font-size:16px;line-height:16px;color:#1b7fd6;">x</span>
<span class="t" style="left:160.20px;top:453.66px;font-size:16px;line-height:16px;color:#337ab7;font-weight:700;letter-spacing:0.081px;">Campaign Member TPC Set</span>
<span class="t" style="left:160.48px;top:477.63px;font-size:15.2px;line-height:15.2px;color:#1b82d8;letter-spacing:0.739px;">Field Mapping</span>
<span class="t" style="left:276.47px;top:477.11px;font-size:17px;line-height:17px;color:#444444;">|</span>
<span class="t" style="left:290.14px;top:477.63px;font-size:15.2px;line-height:15.2px;color:#1b82d8;letter-spacing:0.272px;">Criteria Set</span>
<span class="t" style="left:162.70px;top:501.75px;font-size:14px;line-height:14px;color:#000000;letter-spacing:-0.073px;">Active</span>
<span class="t" style="left:774.77px;top:476.33px;font-size:14.5px;line-height:14.5px;color:#ffffff;font-weight:700;font-style:italic;">C</span>
<span class="t" style="left:1382.74px;top:438.06px;font-size:16px;line-height:16px;color:#7a7a7a;">x</span>
<span class="t" style="left:849.94px;top:450.73px;font-size:15.2px;line-height:15.2px;color:#949494;letter-spacing:0.324px;">CampaignMember TPC Set</span>
<span class="t" style="left:849.48px;top:477.53px;font-size:15.2px;line-height:15.2px;color:#949494;letter-spacing:0.739px;">Field Mapping</span>
<span class="t" style="left:965.47px;top:477.11px;font-size:17px;line-height:17px;color:#555555;">|</span>
<span class="t" style="left:979.14px;top:477.53px;font-size:15.2px;line-height:15.2px;color:#949494;letter-spacing:0.272px;">Criteria Set</span>
<span class="t" style="left:849.93px;top:502.33px;font-size:15.2px;line-height:15.2px;color:#5e5e5e;letter-spacing:0.447px;">Inactive</span>
<span class="t" style="left:85.78px;top:597.33px;font-size:14.5px;line-height:14.5px;color:#ffffff;font-weight:700;font-style:italic;">C</span>
<span class="t" style="left:693.74px;top:559.06px;font-size:16px;line-height:16px;color:#7a7a7a;">x</span>
<span class="t" style="left:160.94px;top:571.73px;font-size:15.2px;line-height:15.2px;color:#949494;letter-spacing:0.324px;">CampaignMember TPC Set</span>
<span class="t" style="left:160.48px;top:598.53px;font-size:15.2px;line-height:15.2px;color:#949494;letter-spacing:0.739px;">Field Mapping</span>
<span class="t" style="left:276.47px;top:598.11px;font-size:17px;line-height:17px;color:#555555;">|</span>
<span class="t" style="left:290.14px;top:598.53px;font-size:15.2px;line-height:15.2px;color:#949494;letter-spacing:0.272px;">Criteria Set</span>
<span class="t" style="left:160.93px;top:623.33px;font-size:15.2px;line-height:15.2px;color:#5e5e5e;letter-spacing:0.447px;">Inactive</span>
<span class="t" style="left:774.77px;top:597.33px;font-size:14.5px;line-height:14.5px;color:#ffffff;font-weight:700;font-style:italic;">C</span>
<span class="t" style="left:1382.74px;top:559.06px;font-size:16px;line-height:16px;color:#7a7a7a;">x</span>
<span class="t" style="left:849.94px;top:571.73px;font-size:15.2px;line-height:15.2px;color:#949494;letter-spacing:0.324px;">CampaignMember TPC Set</span>
<span class="t" style="left:849.48px;top:598.53px;font-size:15.2px;line-height:15.2px;color:#949494;letter-spacing:0.739px;">Field Mapping</span>
<span class="t" style="left:965.47px;top:598.11px;font-size:17px;line-height:17px;color:#555555;">|</span>
<span class="t" style="left:979.14px;top:598.53px;font-size:15.2px;line-height:15.2px;color:#949494;letter-spacing:0.272px;">Criteria Set</span>
<span class="t" style="left:849.93px;top:623.33px;font-size:15.2px;line-height:15.2px;color:#5e5e5e;letter-spacing:0.447px;">Inactive</span>
<span class="t" style="left:85.78px;top:717.33px;font-size:14.5px;line-height:14.5px;color:#ffffff;font-weight:700;font-style:italic;">C</span>
<span class="t" style="left:693.74px;top:679.06px;font-size:16px;line-height:16px;color:#1b7fd6;">x</span>
<span class="t" style="left:160.20px;top:694.66px;font-size:16px;line-height:16px;color:#337ab7;font-weight:700;letter-spacing:0.081px;">Campaign Member TPC Set</span>
<span class="t" style="left:160.48px;top:718.63px;font-size:15.2px;line-height:15.2px;color:#1b82d8;letter-spacing:0.739px;">Field Mapping</span>
<span class="t" style="left:276.47px;top:718.11px;font-size:17px;line-height:17px;color:#444444;">|</span>
<span class="t" style="left:290.14px;top:718.63px;font-size:15.2px;line-height:15.2px;color:#1b82d8;letter-spacing:0.272px;">Criteria Set</span>
<span class="t" style="left:162.70px;top:742.75px;font-size:14px;line-height:14px;color:#000000;letter-spacing:-0.073px;">Active</span>
<span class="t" style="left:774.77px;top:717.33px;font-size:14.5px;line-height:14.5px;color:#ffffff;font-weight:700;font-style:italic;">C</span>
<span class="t" style="left:1382.74px;top:679.06px;font-size:16px;line-height:16px;color:#7a7a7a;">x</span>
<span class="t" style="left:849.94px;top:691.73px;font-size:15.2px;line-height:15.2px;color:#949494;letter-spacing:0.324px;">CampaignMember TPC Set</span>
<span class="t" style="left:849.48px;top:718.53px;font-size:15.2px;line-height:15.2px;color:#949494;letter-spacing:0.739px;">Field Mapping</span>
<span class="t" style="left:965.47px;top:718.11px;font-size:17px;line-height:17px;color:#555555;">|</span>
<span class="t" style="left:979.14px;top:718.53px;font-size:15.2px;line-height:15.2px;color:#949494;letter-spacing:0.272px;">Criteria Set</span>
<span class="t" style="left:849.93px;top:743.33px;font-size:15.2px;line-height:15.2px;color:#5e5e5e;letter-spacing:0.447px;">Inactive</span>
</body>
</html>
